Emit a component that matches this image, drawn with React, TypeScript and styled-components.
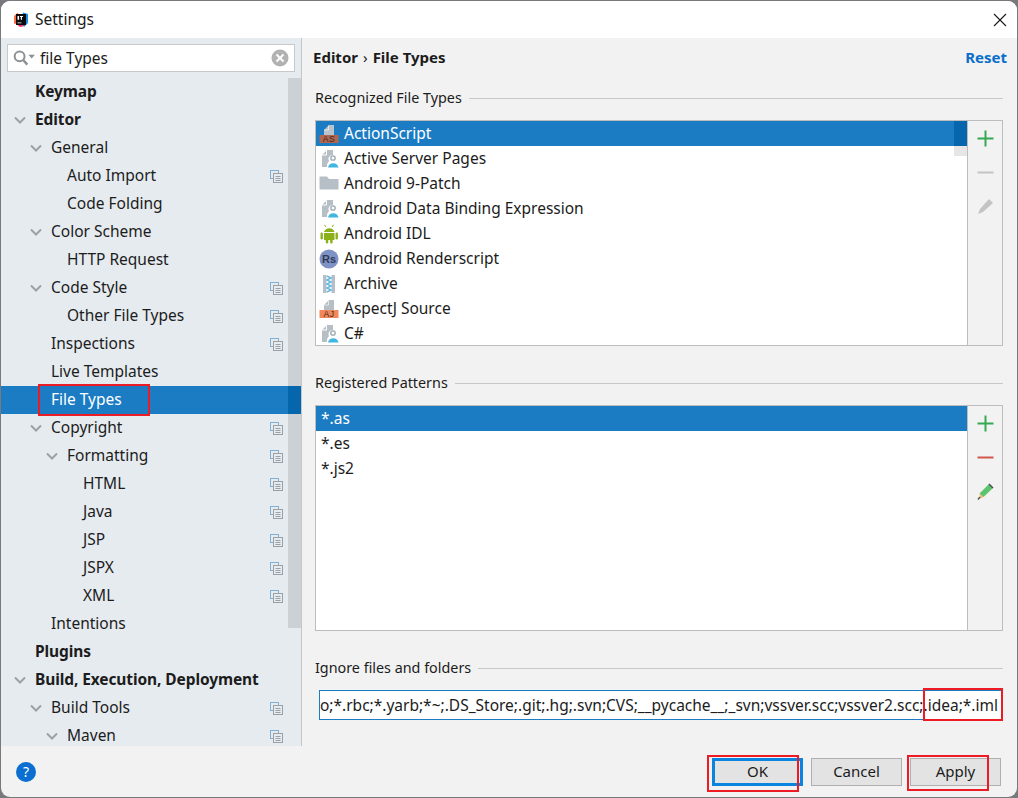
import React from "react";
import styled, { createGlobalStyle } from "styled-components";

const Global = createGlobalStyle`
  html, body { margin: 0; padding: 0; background: #8a8a8a; }
  body { font-family: "Noto Sans", "Open Sans", "Liberation Sans", sans-serif; color: #1c1c1c; }
  * { box-sizing: border-box; }
`;

const Page = styled.div`
  width: 1018px;
  height: 798px;
  padding: 1px 1px 1px 1px;
  background: #77797c;
  overflow: hidden;
`;
const Window = styled.div`
  position: relative;
  width: 1016px;
  height: 796px;
  border-radius: 9px;
  overflow: hidden;
  background: #f2f2f2;
  display: flex;
  flex-direction: column;
`;
const TitleBar = styled.div`
  height: 37px;
  flex: none;
  background: #fff;
  display: flex;
  align-items: center;
  padding: 0 10px 0 12px;
  gap: 7px;
  font-size: 15px;
`;
const Title = styled.span`
  flex: 1;
  font-size: 15.5px;
  line-height: 1;
`;
const Body = styled.div`
  flex: none;
  height: 708px;
  display: flex;
`;
const Sidebar = styled.div`
  position: relative;
  width: 301px;
  flex: none;
  background: #e6ebf0;
  border-right: 1px solid #c6c6c6;
  overflow: hidden;
`;
const SearchBox = styled.div`
  margin: 6px 6px 0 6px;
  height: 28px;
  background: #fff;
  border: 1px solid #c6c9cc;
  display: flex;
  align-items: center;
  padding: 0 5px;
  font-size: 15.5px;
`;
const SearchText = styled.span`
  flex: 1;
  margin-left: 5px;
`;
const Tree = styled.div`
  margin-top: 6px;
  display: flex;
  flex-direction: column;
`;
const Row = styled.div<{ $level: number; $bold?: boolean; $selected?: boolean }>`
  height: 28px;
  flex: none;
  display: flex;
  align-items: center;
  font-size: 15.5px;
  line-height: 1;
  padding-left: ${(p) => 34 + p.$level * 16}px;
  font-weight: ${(p) => (p.$bold ? 700 : 400)};
  letter-spacing: ${(p) => (p.$bold ? "-0.1px" : "0")};
  background: ${(p) => (p.$selected ? "#1b7cc4" : "transparent")};
  color: ${(p) => (p.$selected ? "#fff" : "#1c1c1c")};
`;
const Chevron = styled.svg`
  width: 12px;
  height: 8px;
  margin-left: -21px;
  margin-right: 9px;
  flex: none;
`;
const RowLabel = styled.span`
  flex: 1;
`;
const CopyIcon = styled.svg`
  width: 13px;
  height: 13px;
  margin-right: 18px;
  flex: none;
`;
const TreeScrollbar = styled.div`
  position: absolute;
  top: 40px;
  right: 0;
  width: 13px;
  height: 550px;
  background: #ccd1d5;
`;
const TreeScrollSelected = styled.div`
  position: absolute;
  top: 348px;
  right: 0;
  width: 13px;
  height: 28px;
  background: #0565ad;
`;

const Main = styled.div`
  flex: 1;
  min-width: 0;
  display: flex;
  flex-direction: column;
  padding: 0 14px 0 11px;
`;
const Heading = styled.div`
  height: 41px;
  flex: none;
  display: flex;
  align-items: center;
  font-size: 15px;
  font-weight: 700;
  padding-bottom: 3px;
  margin: 0 -4px 9px 0;
  justify-content: space-between;
`;
const Crumb = styled.span`
  font-weight: 400;
  margin: 0 5px;
`;
const Reset = styled.span`
  color: #0a6fcb;
`;
const Section = styled.div`
  display: flex;
  align-items: center;
  gap: 7px;
  font-size: 14.35px;
  height: 20px;
  padding-left: 2px;
  flex: none;
  line-height: 1;
`;
const SectionLine = styled.div`
  flex: 1;
  height: 1px;
  background: #c8c8c8;
`;
const ListFrame = styled.div<{ $mb: number }>`
  position: relative;
  margin: 12px 0 ${(p) => p.$mb}px 2px;
  height: 226px;
  flex: none;
  display: flex;
  border: 1px solid #bdbdbd;
  background: #f2f2f2;
`;
const List = styled.div`
  position: relative;
  flex: 1;
  background: #fff;
  overflow: hidden;
  border-right: 1px solid #bdbdbd;
`;
const ListRow = styled.div<{ $selected?: boolean }>`
  height: 25px;
  display: flex;
  align-items: center;
  gap: 5px;
  padding-left: 3px;
  font-size: 15.5px;
  line-height: 1;
  background: ${(p) => (p.$selected ? "#1b7cc4" : "#fff")};
  color: ${(p) => (p.$selected ? "#fff" : "#1c1c1c")};
`;
const PatternRow = styled(ListRow)`
  padding-left: 5px;
`;
const ListThumb = styled.div`
  position: absolute;
  top: 0;
  right: 0;
  width: 13px;
  height: 35px;
  background: #e6e6e6;
`;
const ListThumbSelected = styled.div`
  width: 13px;
  height: 25px;
  background: #0565ad;
`;
const FileIcon = styled.svg`
  width: 20px;
  height: 20px;
  flex: none;
`;
const Tools = styled.div`
  width: 34px;
  flex: none;
  display: flex;
  flex-direction: column;
  align-items: center;
  padding-top: 9px;
  gap: 17px;
`;
const ToolIcon = styled.svg`
  width: 17px;
  height: 17px;
  flex: none;
`;
const PatternInput = styled.div`
  margin: 12px 0 0 6px;
  height: 30px;
  flex: none;
  background: #fff;
  border: 1px solid #1b7cc4;
  display: flex;
  justify-content: flex-end;
  align-items: center;
  overflow: hidden;
  padding-right: 4px;
  font-size: 15.5px;
  white-space: nowrap;
`;
const Footer = styled.div`
  flex: 1;
  display: flex;
  align-items: center;
  justify-content: space-between;
  padding: 0 16px 0 15px;
`;
const Help = styled.div`
  width: 20px;
  height: 20px;
  border-radius: 50%;
  background: #0a6fd0;
  color: #fff;
  display: flex;
  align-items: center;
  justify-content: center;
  font-size: 14px;
  line-height: 1;
`;
const Buttons = styled.div`
  display: flex;
  gap: 8px;
`;
const Button = styled.div<{ $primary?: boolean }>`
  width: 91px;
  height: 28px;
  background: #e3e3e3;
  border: ${(p) => (p.$primary ? "3px solid #0a84de" : "1px solid #b0b0b0")};
  display: flex;
  align-items: center;
  justify-content: center;
  font-size: 15px;
  line-height: 1;
`;
const Highlight = styled.div<{ $x: number; $y: number; $w: number; $h: number }>`
  position: absolute;
  left: ${(p) => p.$x}px;
  top: ${(p) => p.$y}px;
  width: ${(p) => p.$w}px;
  height: ${(p) => p.$h}px;
  border: 2px solid #ed1c24;
  pointer-events: none;
`;

const ChevronIcon = () => (
  <Chevron viewBox="0 0 12 8">
    <path d="M1 1.5 L6 6.5 L11 1.5" fill="none" stroke="#9da1a5" strokeWidth="2" />
  </Chevron>
);
const Copy = () => (
  <CopyIcon viewBox="0 0 13 13">
    <rect x="0.5" y="0.5" width="8" height="8" fill="none" stroke="#7fb0d6" />
    <rect x="3.5" y="3.5" width="9" height="9" fill="#e6ebf0" stroke="#9aa0a6" />
    <path d="M5.5 6.5h5M5.5 8.5h5M5.5 10.5h5" stroke="#9aa0a6" />
  </CopyIcon>
);

type Tr = { label: string; level: number; bold?: boolean; open?: boolean; copy?: boolean; selected?: boolean };
const tree: Tr[] = [
  { label: "Keymap", level: 0, bold: true },
  { label: "Editor", level: 0, bold: true, open: true },
  { label: "General", level: 1, open: true },
  { label: "Auto Import", level: 2, copy: true },
  { label: "Code Folding", level: 2 },
  { label: "Color Scheme", level: 1, open: true },
  { label: "HTTP Request", level: 2 },
  { label: "Code Style", level: 1, open: true, copy: true },
  { label: "Other File Types", level: 2, copy: true },
  { label: "Inspections", level: 1, copy: true },
  { label: "Live Templates", level: 1 },
  { label: "File Types", level: 1, selected: true },
  { label: "Copyright", level: 1, open: true, copy: true },
  { label: "Formatting", level: 2, open: true, copy: true },
  { label: "HTML", level: 3, copy: true },
  { label: "Java", level: 3, copy: true },
  { label: "JSP", level: 3, copy: true },
  { label: "JSPX", level: 3, copy: true },
  { label: "XML", level: 3, copy: true },
  { label: "Intentions", level: 1 },
  { label: "Plugins", level: 0, bold: true },
  { label: "Build, Execution, Deployment", level: 0, bold: true, open: true },
  { label: "Build Tools", level: 1, open: true, copy: true },
  { label: "Maven", level: 2, open: true, copy: true },
];

const BarIcon = ({ bar, text, page, tc }: { bar: string; text: string; page: string; tc: string }) => (
  <FileIcon viewBox="0 0 20 20">
    <path d="M10 1 H15 V11 H5 V6 Z" fill={page} />
    <path d="M9.5 1.5 V6 H5" fill="none" stroke="#ffffff" strokeOpacity="0.6" />
    <rect x="0.5" y="11" width="19" height="8" fill={bar} />
    <text x="10" y="18" fontSize="8.5" textAnchor="middle" fill={tc} fontFamily="Liberation Sans" letterSpacing="0.5">{text}</text>
  </FileIcon>
);
const PersonIcon = () => (
  <FileIcon viewBox="0 0 20 20">
    <path d="M8 1 H14 V6 A4 4 0 0 0 10 12 A7 7 0 0 0 8 18 H3 V6 Z" fill="#b6bfc6" />
    <path d="M7.5 1.5 V6 H3" fill="none" stroke="#fff" />
    <circle cx="14" cy="9" r="2.2" fill="#fff" stroke="#9aa7b0" strokeWidth="1.3" />
    <path d="M9 18.5 A5.5 6 0 0 1 19.5 18.5 Z" fill="#40b6e0" />
  </FileIcon>
);
const FolderIcon = () => (
  <FileIcon viewBox="0 0 20 20">
    <path d="M0.5 2.5 H8 L10 5 H19.5 V15.5 H0.5 Z" fill="#b6bfc6" />
  </FileIcon>
);
const AndroidIcon = () => (
  <FileIcon viewBox="0 0 20 20">
    <path d="M5 8 A5.5 5.5 0 0 1 15.5 8 Z" fill="#8cb018" />
    <path d="M7 3 L5.5 0.8 M13 3 L14.5 0.8" stroke="#8cb018" />
    <rect x="5" y="9" width="10.5" height="7" fill="#8cb018" />
    <rect x="1.5" y="8.5" width="2.4" height="7" rx="1.2" fill="#8cb018" />
    <rect x="16.5" y="8.5" width="2.4" height="7" rx="1.2" fill="#8cb018" />
    <rect x="6.8" y="15" width="2.4" height="4.5" rx="1.2" fill="#8cb018" />
    <rect x="11.2" y="15" width="2.4" height="4.5" rx="1.2" fill="#8cb018" />
  </FileIcon>
);
const RsIcon = () => (
  <FileIcon viewBox="0 0 20 20">
    <circle cx="10" cy="10" r="9.5" fill="#7f92c5" />
    <text x="10" y="14" fontSize="11" fontWeight="700" textAnchor="middle" fill="#2f3b55" fontFamily="Liberation Sans">Rs</text>
  </FileIcon>
);
const ZipIcon = () => (
  <FileIcon viewBox="0 0 20 20">
    <rect x="4" y="1" width="12" height="18" fill="#b6bfc6" />
    <rect x="7.5" y="1" width="5" height="18" fill="#ffffff" />
    <path d="M8 2 L12 4 L8 6 L12 8 L8 10 L12 12 L8 14 L12 16 L8 18" fill="none" stroke="#62b8de" strokeWidth="1.5" />
  </FileIcon>
);

const types: { label: string; icon: React.ReactNode; selected?: boolean }[] = [
  { label: "ActionScript", selected: true, icon: <BarIcon bar="#b0664f" text="AS" page="#b9c3cb" tc="#3a2a25" /> },
  { label: "Active Server Pages", icon: <PersonIcon /> },
  { label: "Android 9-Patch", icon: <FolderIcon /> },
  { label: "Android Data Binding Expression", icon: <PersonIcon /> },
  { label: "Android IDL", icon: <AndroidIcon /> },
  { label: "Android Renderscript", icon: <RsIcon /> },
  { label: "Archive", icon: <ZipIcon /> },
  { label: "AspectJ Source", icon: <BarIcon bar="#f2875a" text="AJ" page="#b6bfc6" tc="#3a2a25" /> },
  { label: "C#", icon: <PersonIcon /> },
];

const Plus = ({ c }: { c: string }) => (
  <ToolIcon viewBox="0 0 17 17">
    <path d="M0.5 8.5 H16.5 M8.5 0.5 V16.5" stroke={c} strokeWidth="2" />
  </ToolIcon>
);
const Minus = ({ c }: { c: string }) => (
  <ToolIcon viewBox="0 0 17 17">
    <path d="M0.5 8.5 H16.5" stroke={c} strokeWidth="2" />
  </ToolIcon>
);
const PencilGrey = () => (
  <ToolIcon viewBox="0 0 17 17">
    <path d="M12 1 L16 5 L6 14 L1 16 L3 11 Z" fill="#c4c4c4" />
  </ToolIcon>
);
const PencilGreen = () => (
  <ToolIcon viewBox="0 0 17 17">
    <path d="M12 1 L16 5 L6.5 14 L2.5 10.5 Z" fill="#5cc46e" />
    <path d="M12 1 L16 5" stroke="#4a4f52" strokeWidth="1.4" />
    <path d="M2.5 10.5 L6.5 14 L3 15.5 Z" fill="#f2b36a" />
    <path d="M3 14 L1 16.5" stroke="#555" strokeWidth="1.4" />
  </ToolIcon>
);

export default function App() {
  return (
    <Page>
      <Global />
      <Window>
        <TitleBar>
          <svg width="15" height="15" viewBox="0 0 15 15">
            <path d="M1 4 L5 0.5 L5 10 L1 12 Z" fill="#f9733a" />
            <path d="M2 11 L7 15 L12 14 L4 8 Z" fill="#f72a6b" />
            <path d="M10 0.5 L15 2 L15 11 L11 15 L9 5 Z" fill="#1f8ceb" />
            <rect x="3" y="2" width="10" height="11" fill="#0c0c0c" />
            <path d="M4.5 4h1.6v3.8H4.5zM7 4h3v1H9v2.8H7.8V5H7zM4.5 10.5h4v.8h-4z" fill="#fff" />
          </svg>
          <Title>Settings</Title>
          <svg width="14" height="14" viewBox="0 0 14 14">
            <path d="M1 1 L13 13 M13 1 L1 13" stroke="#1a1a1a" strokeWidth="1.1" />
          </svg>
        </TitleBar>
        <Body>
          <Sidebar>
            <SearchBox>
              <svg width="22" height="18" viewBox="0 0 20 16">
                <circle cx="6" cy="6.5" r="4.5" fill="none" stroke="#8b9196" strokeWidth="1.8" />
                <path d="M9.5 10 L13 14" stroke="#8b9196" strokeWidth="2.2" />
                <path d="M14 5 H20 L17 8.5 Z" fill="#8b9196" />
              </svg>
              <SearchText>file Types</SearchText>
              <svg width="18" height="18" viewBox="0 0 18 18">
                <circle cx="9" cy="9" r="8.5" fill="#b2b2b2" />
                <path d="M5.5 5.5 L12.5 12.5 M12.5 5.5 L5.5 12.5" stroke="#fff" strokeWidth="2" />
              </svg>
            </SearchBox>
            <Tree>
              {tree.map((t) => (
                <Row key={t.label} $level={t.level} $bold={t.bold} $selected={t.selected}>
                  {t.open && <ChevronIcon />}
                  <RowLabel>{t.label}</RowLabel>
                  {t.copy && <Copy />}
                </Row>
              ))}
            </Tree>
            <TreeScrollbar />
            <TreeScrollSelected />
          </Sidebar>
          <Main>
            <Heading>
              <span>
                Editor<Crumb>›</Crumb>File Types
              </span>
              <Reset>Reset</Reset>
            </Heading>
            <Section>
              Recognized File Types
              <SectionLine />
            </Section>
            <ListFrame $mb={27}>
              <List>
                {types.map((t) => (
                  <ListRow key={t.label} $selected={t.selected}>
                    {t.icon}
                    {t.label}
                  </ListRow>
                ))}
                <ListThumb>
                  <ListThumbSelected />
                </ListThumb>
              </List>
              <Tools>
                <Plus c="#34a853" />
                <Minus c="#c4c4c4" />
                <PencilGrey />
              </Tools>
            </ListFrame>
            <Section>
              Registered Patterns
              <SectionLine />
            </Section>
            <ListFrame $mb={27}>
              <List>
                <PatternRow $selected>*.as</PatternRow>
                <PatternRow>*.es</PatternRow>
                <PatternRow>*.js2</PatternRow>
              </List>
              <Tools>
                <Plus c="#34a853" />
                <Minus c="#d0574b" />
                <PencilGreen />
              </Tools>
            </ListFrame>
            <Section>
              Ignore files and folders
              <SectionLine />
            </Section>
            <PatternInput>
              *.hprof;*.pyc;*.pyo;*.rbc;*.yarb;*~;.DS_Store;.git;.hg;.svn;CVS;__pycache__;_svn;vssver.scc;vssver2.scc;.idea;*.iml
            </PatternInput>
          </Main>
        </Body>
        <Footer>
          <Help>?</Help>
          <Buttons>
            <Button $primary>OK</Button>
            <Button>Cancel</Button>
            <Button>Apply</Button>
          </Buttons>
        </Footer>
        <Highlight $x={37} $y={383} $w={112} $h={32} />
        <Highlight $x={922} $y={687} $w={80} $h={33} />
        <Highlight $x={706} $y={754} $w={92} $h={37} />
        <Highlight $x={906} $y={754} $w={82} $h={36} />
      </Window>
    </Page>
  );
}
